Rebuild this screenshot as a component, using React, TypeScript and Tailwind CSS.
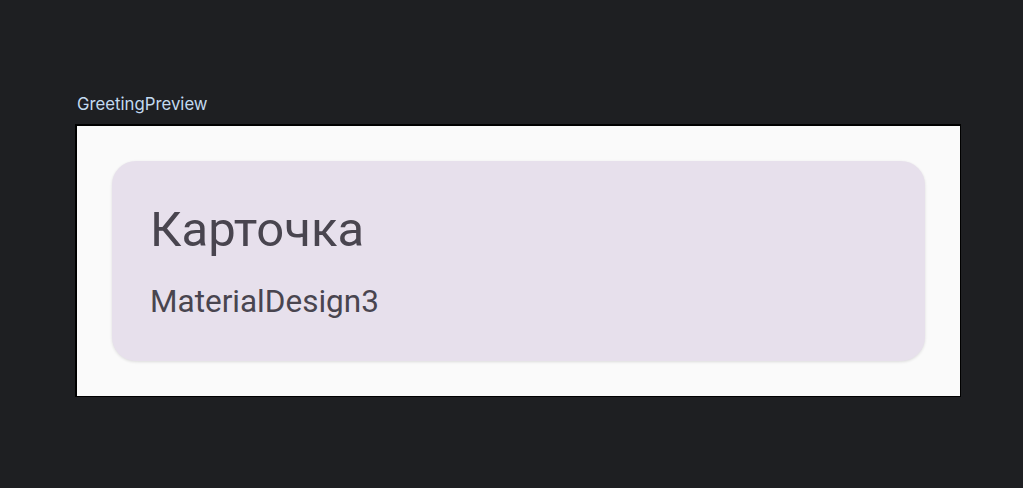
export default function App() {
  return (
    <div className="w-[1023px] h-[488px] bg-[#1e1f22] pt-[92px] pl-[75px]">
      <div className="pl-[2px] text-[16.75px] leading-[24px] text-[#c3daf0] h-[32px]" style={{ fontFamily: "Inter, sans-serif" }}>
        GreetingPreview
      </div>
      <div className="w-[886px] h-[273px] border-l-2 border-t-2 border-r border-b border-black bg-[#fafafa] p-[35px]">
        <div
          className="h-[200px] rounded-[24px] bg-[#e7e0ec] shadow-[0_1px_3px_rgba(0,0,0,0.12)] pl-[38px] pt-[37px] text-[#49454f]"
          style={{ fontFamily: "Roboto, sans-serif" }}
        >
          <div className="text-[49px] leading-[64px]">Карточка</div>
          <div className="text-[31.5px] leading-[40px] mt-[20px]">MaterialDesign3</div>
        </div>
      </div>
    </div>
  );
}
